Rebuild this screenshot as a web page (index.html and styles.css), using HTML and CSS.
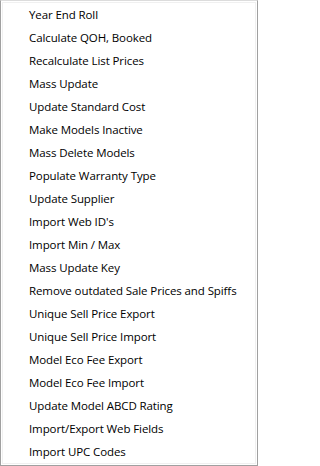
FILE: index.html
```html
<!DOCTYPE html>
<html>
<head>
<meta charset="utf-8">
<link rel="stylesheet" href="styles.css">
</head>
<body>
<div class="menu">
  <ul class="menu-list">
    <li class="menu-item">Year End Roll</li>
    <li class="menu-item">Calculate QOH, Booked</li>
    <li class="menu-item">Recalculate List Prices</li>
    <li class="menu-item">Mass Update</li>
    <li class="menu-item">Update Standard Cost</li>
    <li class="menu-item">Make Models Inactive</li>
    <li class="menu-item">Mass Delete Models</li>
    <li class="menu-item">Populate Warranty Type</li>
    <li class="menu-item">Update Supplier</li>
    <li class="menu-item">Import Web ID's</li>
    <li class="menu-item">Import Min / Max</li>
    <li class="menu-item">Mass Update Key</li>
    <li class="menu-item">Remove outdated Sale Prices and Spiffs</li>
    <li class="menu-item">Unique Sell Price Export</li>
    <li class="menu-item">Unique Sell Price Import</li>
    <li class="menu-item">Model Eco Fee Export</li>
    <li class="menu-item">Model Eco Fee Import</li>
    <li class="menu-item">Update Model ABCD Rating</li>
    <li class="menu-item">Import/Export Web Fields</li>
    <li class="menu-item">Import UPC Codes</li>
  </ul>
</div>
</body>
</html>
```

FILE: styles.css
```css
html, body {
  margin: 0;
  padding: 0;
  background: #ffffff;
}

.menu {
  box-sizing: border-box;
  width: 258px;
  height: 466px;
  background: #ffffff;
  border: 1px solid #a0a0a0;
  border-top-color: #dcdcdc;
  box-shadow: inset 0 0 0 1px #ffffff, inset 0 0 0 2px #f0f0f0;
  padding: 2px 2px 3px 2px;
  font-family: "Open Sans", "Noto Sans", sans-serif;
  font-size: 11.5px;
  letter-spacing: -0.1px;
  color: #000000;
}

.menu-list {
  list-style: none;
  margin: 0;
  padding: 0;
}

.menu-item {
  height: 23px;
  line-height: 23px;
  padding-left: 26px;
  white-space: nowrap;
}
```
